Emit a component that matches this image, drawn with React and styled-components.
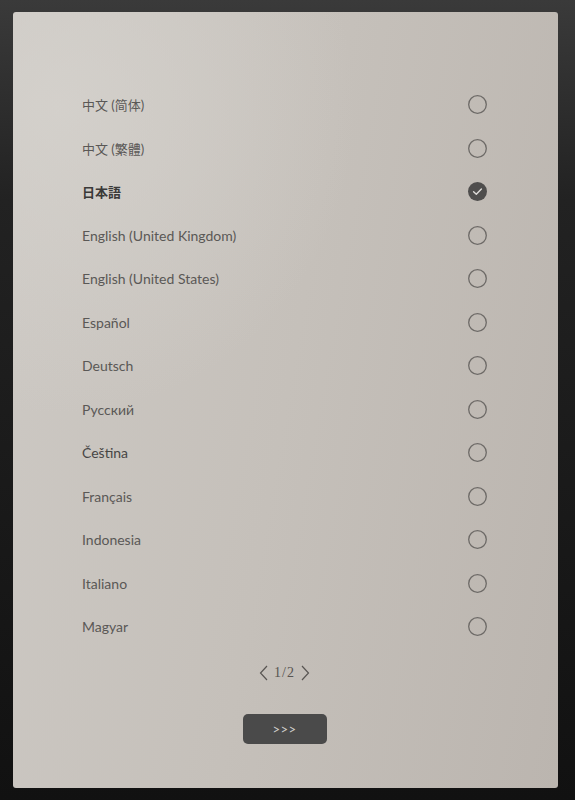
import React from 'react'
import styled, { createGlobalStyle } from 'styled-components'

const languages = [
  { label: '中文 (简体)', cjk: true },
  { label: '中文 (繁體)', cjk: true },
  { label: '日本語', cjk: true, selected: true },
  { label: 'English (United Kingdom)' },
  { label: 'English (United States)' },
  { label: 'Español' },
  { label: 'Deutsch' },
  { label: 'Русский' },
  { label: 'Čeština', dark: true },
  { label: 'Français' },
  { label: 'Indonesia' },
  { label: 'Italiano' },
  { label: 'Magyar' },
]

const Radio = ({ checked }) => (
  <RadioWrap>
    {checked ? (
      <svg width="19" height="19" viewBox="0 0 19 19">
        <circle cx="9.5" cy="9.5" r="9.5" fill="#4f4e4d" />
        <polyline points="5.6,9.8 8.3,12.3 13.4,6.9" fill="none" stroke="#dedcd9" strokeWidth="1.4" strokeLinecap="round" strokeLinejoin="round" />
      </svg>
    ) : (
      <svg width="19" height="19" viewBox="0 0 19 19">
        <circle cx="9.5" cy="9.5" r="8.8" fill="none" stroke="#6d6a67" strokeWidth="1.3" />
      </svg>
    )}
  </RadioWrap>
)

const Chevron = ({ dir }) => (
  <svg width="9" height="16" viewBox="0 0 9 16">
    <polyline
      points={dir === 'left' ? '8,1 1.5,8 8,15' : '1,1 7.5,8 1,15'}
      fill="none"
      stroke="#585552"
      strokeWidth="1.2"
      strokeLinejoin="miter"
    />
  </svg>
)

const App = () => {
  return (
    <>
      <Global />
      <Bezel>
        <Screen>
          <List>
            {languages.map((l) => (
              <Row key={l.label}>
                <Label cjk={l.cjk} bold={l.selected} dark={l.dark}>{l.label}</Label>
                <Radio checked={l.selected} />
              </Row>
            ))}
          </List>
          <Pager>
            <Chevron dir="left" />
            <PageText>1/2</PageText>
            <Chevron dir="right" />
          </Pager>
          <NextButton>&gt;&gt;&gt;</NextButton>
        </Screen>
      </Bezel>
    </>
  )
}

export default App

const Global = createGlobalStyle`
html, body {
  margin: 0;
  padding: 0;
  background: #141414;
}
`

const Bezel = styled.div`
width: 575px;
height: 800px;
box-sizing: border-box;
padding: 12px 17px 12px 13px;
background: linear-gradient(180deg, #3a3a3a 0%, #222 25%, #111 100%);
`

const Screen = styled.div`
height: 100%;
box-sizing: border-box;
padding: 71px 71px 0 69px;
border-radius: 3px;
display: flex;
flex-direction: column;
align-items: center;
background:
  radial-gradient(ellipse 55% 40% at 8% 12%, rgba(214, 211, 206, 0.75), rgba(214, 211, 206, 0) 100%),
  linear-gradient(100deg, #cdc9c4 0%, #c5c0ba 50%, #bbb5af 100%);
`

const List = styled.div`
align-self: stretch;
display: flex;
flex-direction: column;
`

const Row = styled.div`
height: 43.5px;
display: flex;
align-items: center;
justify-content: space-between;
`

const Label = styled.span`
font-family: Lato, ${(p) => (p.cjk ? '"Noto Sans CJK JP"' : '"Noto Sans"')}, sans-serif;
font-size: ${(p) => (p.cjk ? '13px' : '14px')};
font-weight: ${(p) => (p.bold ? 700 : 400)};
color: ${(p) => (p.bold ? '#3a3938' : p.dark ? '#474645' : '#5a5856')};
`

const RadioWrap = styled.span`
width: 19px;
height: 19px;
display: flex;
`

const Pager = styled.div`
margin-top: 14px;
display: flex;
align-items: center;
gap: 6px;
height: 20px;
`

const PageText = styled.span`
font-family: "Liberation Serif", serif;
font-size: 14px;
color: #585552;
letter-spacing: 1px;
`

const NextButton = styled.div`
margin-top: 31px;
width: 84px;
height: 30px;
border-radius: 5px;
background: #4a4a4a;
color: #cfcdca;
font-family: Lato, sans-serif;
font-size: 13px;
letter-spacing: 0.5px;
display: flex;
align-items: center;
justify-content: center;
`
